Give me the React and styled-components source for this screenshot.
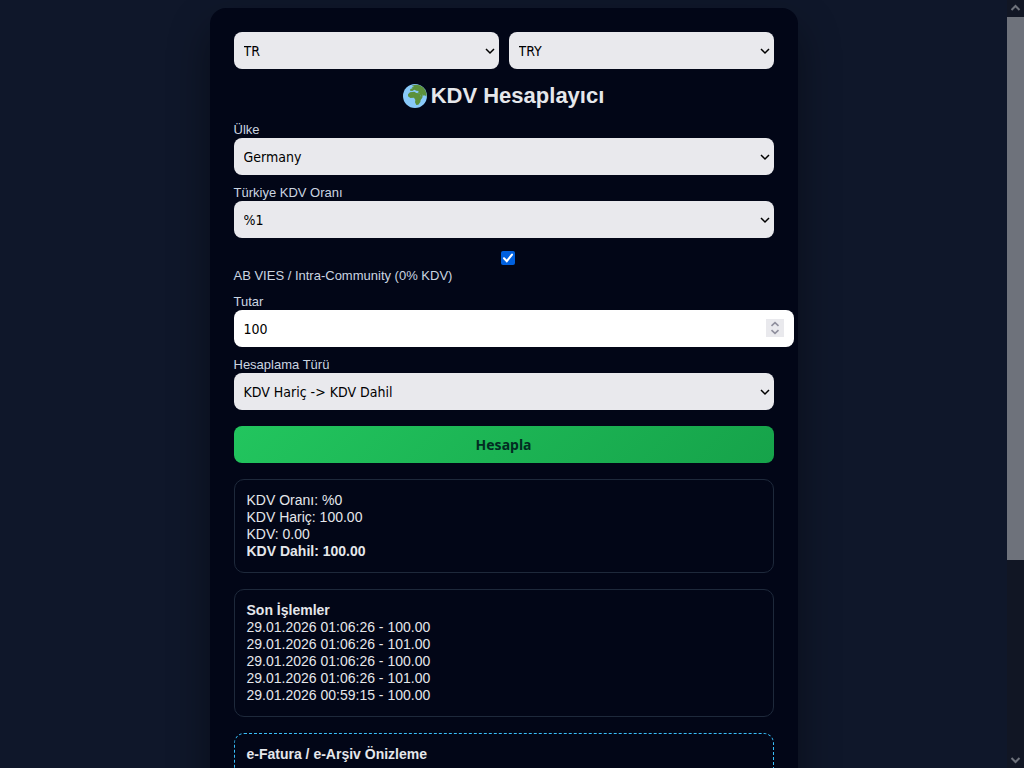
import { useState } from "react";
import styled, { createGlobalStyle } from "styled-components";

const svgUrl = (svg) => `url("data:image/svg+xml,${encodeURIComponent(svg)}")`;

const chevron = svgUrl(
  `<svg xmlns="http://www.w3.org/2000/svg" width="10" height="8" viewBox="0 0 10 8"><path d="M1 2L5 6L9 2" fill="none" stroke="#000" stroke-width="1.5"/></svg>`
);
const spinner = svgUrl(
  `<svg xmlns="http://www.w3.org/2000/svg" width="18" height="18" viewBox="0 0 18 18"><rect width="18" height="18" fill="#e9e9ed"/><path d="M5.5 6.8L9 3.6L12.5 6.8M5.5 11.2L9 14.4L12.5 11.2" fill="none" stroke="#8f8f9d" stroke-width="1.6"/></svg>`
);
const tick = svgUrl(
  `<svg xmlns="http://www.w3.org/2000/svg" width="14" height="14" viewBox="0 0 14 14"><path d="M3 7.3L5.8 10.2L11 3.6" fill="none" stroke="#fff" stroke-width="2.1" stroke-linecap="round"/></svg>`
);

const history = [
  { date: "29.01.2026 01:06:26", total: "100.00" },
  { date: "29.01.2026 01:06:26", total: "101.00" },
  { date: "29.01.2026 01:06:26", total: "100.00" },
  { date: "29.01.2026 01:06:26", total: "101.00" },
  { date: "29.01.2026 00:59:15", total: "100.00" },
];

export default function App() {
  const [vies, setVies] = useState(true);
  const [amount, setAmount] = useState("100");

  return (
    <>
      <GlobalStyle />
      <StyledPage>
        <StyledScroller>
          <StyledCard>
            <StyledTopBar>
              <StyledSelect aria-label="Dil">
                <option>TR</option>
              </StyledSelect>
              <StyledSelect aria-label="Para birimi">
                <option>TRY</option>
              </StyledSelect>
            </StyledTopBar>
            <StyledTitle>
              <Globe />
              KDV Hesaplayıcı
            </StyledTitle>

            <StyledLabel htmlFor="country">Ülke</StyledLabel>
            <StyledSelect id="country">
              <option>Germany</option>
            </StyledSelect>

            <StyledLabel htmlFor="rate">Türkiye KDV Oranı</StyledLabel>
            <StyledSelect id="rate">
              <option>%1</option>
            </StyledSelect>

            <StyledCheckLabel>
              <StyledCheckbox
                type="checkbox"
                checked={vies}
                onChange={(e) => setVies(e.target.checked)}
              />
              AB VIES / Intra-Community (0% KDV)
            </StyledCheckLabel>

            <StyledLabel htmlFor="amount">Tutar</StyledLabel>
            <StyledInput
              id="amount"
              type="number"
              value={amount}
              onChange={(e) => setAmount(e.target.value)}
            />

            <StyledLabel htmlFor="mode">Hesaplama Türü</StyledLabel>
            <StyledSelect id="mode">
              <option>KDV Hariç -&gt; KDV Dahil</option>
            </StyledSelect>

            <StyledButton type="button">Hesapla</StyledButton>

            <StyledBox>
              <p>KDV Oranı: %0</p>
              <p>KDV Hariç: 100.00</p>
              <p>KDV: 0.00</p>
              <p>
                <b>KDV Dahil: 100.00</b>
              </p>
            </StyledBox>

            <StyledBox>
              <b>Son İşlemler</b>
              {history.map((item, i) => (
                <p key={i}>
                  {item.date} - {item.total}
                </p>
              ))}
            </StyledBox>

            <StyledInvoice>
              <b>e-Fatura / e-Arşiv Önizleme</b>
            </StyledInvoice>
          </StyledCard>
        </StyledScroller>
        <StyledScrollbar aria-hidden="true">
          <Arrow d="M4.5 10L8.5 6L12.5 10" />
          <StyledTrack>
            <StyledThumb />
          </StyledTrack>
          <Arrow d="M4.5 7L8.5 11L12.5 7" />
        </StyledScrollbar>
      </StyledPage>
    </>
  );
}

function Globe() {
  return (
    <svg width="24" height="24" viewBox="0 0 36 36" aria-hidden="true">
      <circle cx="18" cy="18" r="18" fill="#88c9f9" />
      <path
        fill="#5c913b"
        d="M13 2.5L18 1.3L25 2L30 5L33.5 9.5L35.5 15L35 19L33 17L31 17.5L29 15.5L30 18.5L27.5 20L24.5 14L22 12.5L24 10.5L20 10L17 8.5L14 10.5L10.5 10L11 7.5L14.5 6.5L13 5L17 4.5Z"
      />
      <path
        fill="#5c913b"
        d="M10.5 12.5L17 11.5L20 13.5L25 14L27 19L29.5 20L26.5 24L26 27L23 31L20 31.5L18 27.5L18.5 24L16.5 20.5L11 21L7.5 18.5L7.5 15.5Z"
      />
    </svg>
  );
}

function Arrow({ d }) {
  return (
    <svg width="17" height="17" viewBox="0 0 17 17">
      <path d={d} fill="none" stroke="#6e727b" strokeWidth="2" />
    </svg>
  );
}

const GlobalStyle = createGlobalStyle`
  body {
    margin: 0;
    background: #0f172a;
    color: #e5e7eb;
    font-family: "Liberation Sans", Arial, sans-serif;
  }
`;

const StyledPage = styled.div`
  display: flex;
  height: 100vh;
`;

const StyledScroller = styled.main`
  flex: 1;
  min-width: 0;
  overflow: hidden auto;
  scrollbar-width: none;
`;

const StyledCard = styled.section`
  max-width: 540px;
  margin: 8px auto;
  padding: 24px;
  border-radius: 16px;
  background: #020617;
  box-shadow: 0 20px 40px rgba(0, 0, 0, 0.4);
`;

const StyledTopBar = styled.div`
  display: flex;
  gap: 10px;
`;

const StyledTitle = styled.h1`
  display: flex;
  justify-content: center;
  align-items: center;
  gap: 4px;
  margin: 14px 0 13px;
  font-size: 22px;
  line-height: 26px;
`;

const StyledLabel = styled.label`
  display: block;
  margin-top: 10px;
  color: #cbd5e1;
  font-size: 13px;
  line-height: 16px;
`;

const StyledCheckLabel = styled(StyledLabel)`
  display: flex;
  flex-direction: column;
`;

const StyledCheckbox = styled.input`
  appearance: none;
  align-self: center;
  width: 14px;
  height: 14px;
  margin: 3px 0 3px 8px;
  border: 1px solid #8f8f9d;
  border-radius: 2px;
  background: #fff;

  &:checked {
    border: 0;
    background: #0060df ${tick} center no-repeat;
  }
`;

const StyledSelect = styled.select`
  appearance: none;
  box-sizing: border-box;
  display: block;
  width: 100%;
  height: 37px;
  padding: 0 10px;
  border: 0;
  border-radius: 8px;
  background: #e9e9ed ${chevron} right 4px center no-repeat;
  color: #000;
  font-family: "DejaVu Sans Condensed", Tahoma, sans-serif;
  font-size: 14px;
`;

const StyledInput = styled.input`
  appearance: textfield;
  box-sizing: content-box;
  display: block;
  width: 100%;
  height: 37px;
  padding: 0 10px;
  border: 0;
  border-radius: 8px;
  background: #fff ${spinner} right 10px top 9px no-repeat;
  color: #000;
  font-family: "DejaVu Sans Condensed", Tahoma, sans-serif;
  font-size: 14px;

  &::-webkit-inner-spin-button {
    appearance: none;
    margin: 0;
  }
`;

const StyledButton = styled.button`
  display: block;
  width: 100%;
  height: 37px;
  margin-top: 16px;
  border: 0;
  border-radius: 8px;
  background: linear-gradient(135deg, #22c55e, #16a34a);
  color: #022c22;
  font-family: "Noto Sans", Tahoma, sans-serif;
  font-size: 14px;
  font-weight: bold;
`;

const StyledBox = styled.div`
  margin-top: 16px;
  padding: 12px;
  border: 1px solid #1e293b;
  border-radius: 10px;
  font-size: 14px;
  line-height: 17px;

  p {
    margin: 0;
  }
`;

const StyledInvoice = styled(StyledBox)`
  min-height: 120px;
  border: 1px dashed #38bdf8;
`;

const StyledScrollbar = styled.div`
  display: flex;
  flex-direction: column;
  width: 17px;
  background: #111624;
`;

const StyledTrack = styled.div`
  flex: 1;
`;

const StyledThumb = styled.div`
  height: 74%;
  background: #6e727b;
`;
